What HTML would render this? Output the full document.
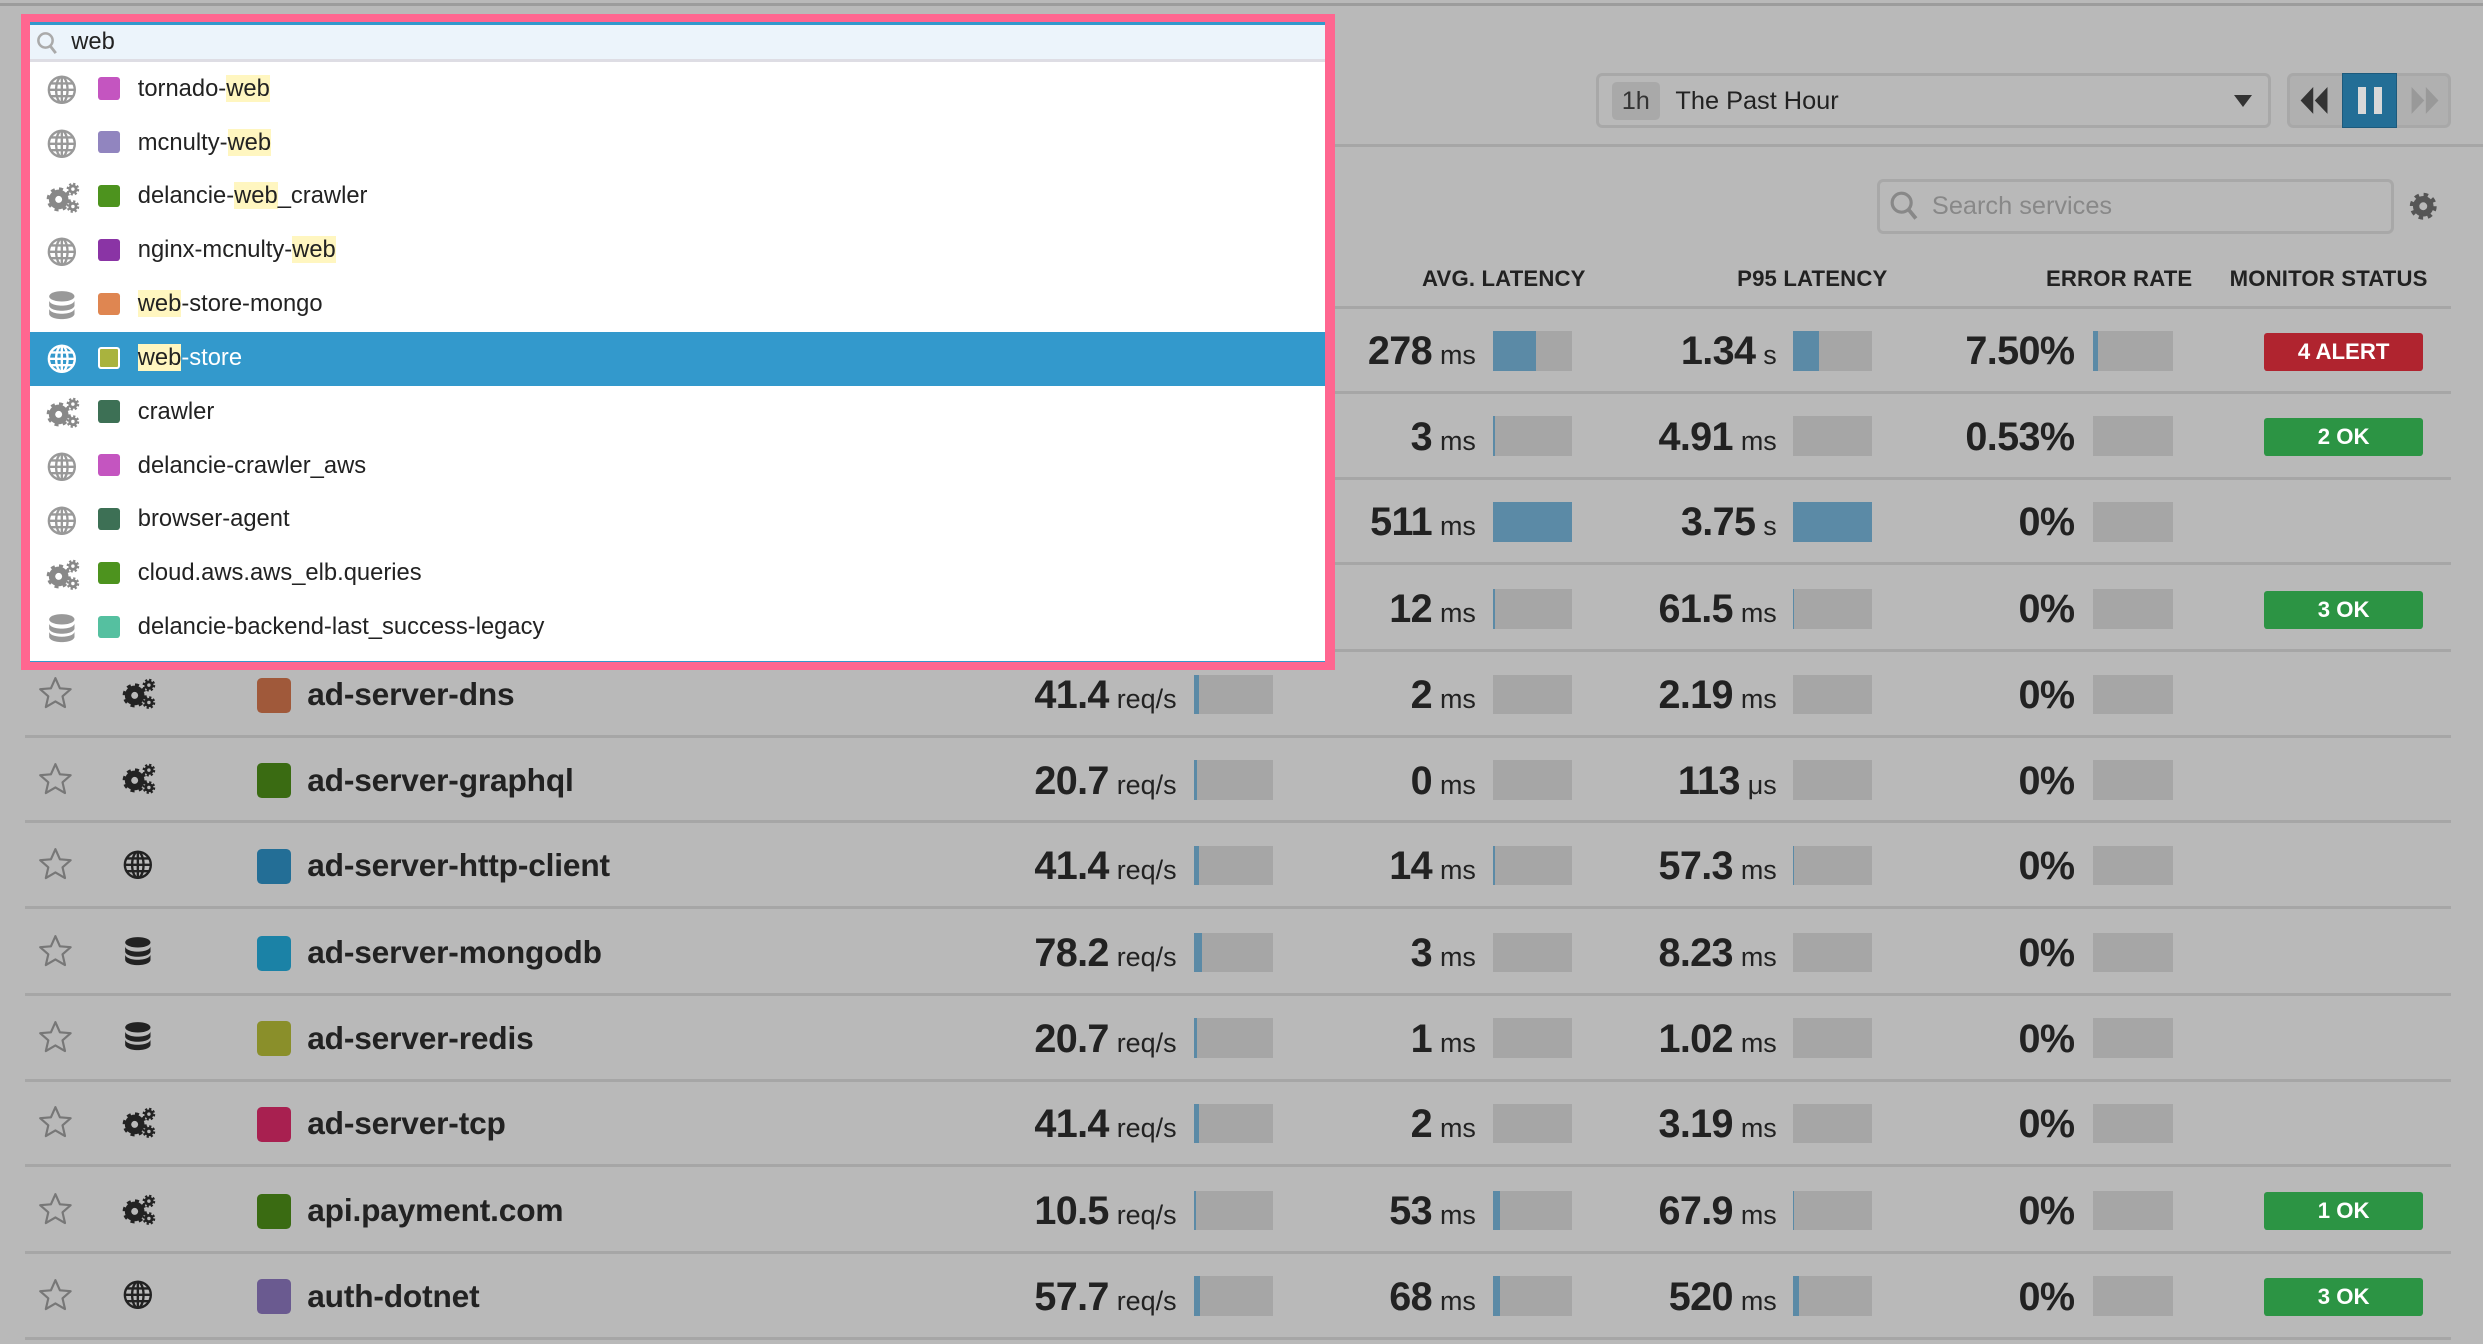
<!DOCTYPE html>
<html><head><meta charset="utf-8">
<style>
*{box-sizing:border-box;margin:0;padding:0}
html,body{width:2483px;height:1344px;overflow:hidden;background:#b9b9b9}
#w{zoom:1.58355;width:1568px;height:849px;position:relative;font-family:"Liberation Sans",sans-serif;color:#222;background:#b9b9b9}
.a{position:absolute}
.r{position:absolute;left:16px;width:1532px;height:54px;border-bottom:2px solid #a6a6a6}
.r>*{position:absolute}
.st{left:8px;top:15px}
.ic{left:61px;top:16px}
.sq{left:146px;top:16px;width:22px;height:22px;border-radius:3px}
.nm{left:178px;top:15px;font-weight:bold;font-size:20px;letter-spacing:-.1px}
.v{top:13px;text-align:right;font-weight:bold;font-size:25px;letter-spacing:-.4px;white-space:nowrap}
.v small{font-size:17px;font-weight:normal;letter-spacing:0;margin-left:5px}
.v1{left:560px;width:167px}.v2{left:760px;width:156px}.v3{left:950px;width:156px}.v4{left:1140px;width:154px}
.b{top:14px;width:50px;height:25px;background:#a6a6a6}
.b i{position:absolute;left:0;top:0;bottom:0;background:#5b8aa6}
.b1{left:738px}.b2{left:927px}.b3{left:1116px}.b4{left:1306px}
.bd{left:1414px;top:15px;width:100px;height:24px;border-radius:2px;color:#fff;font-weight:bold;font-size:14px;text-align:center;line-height:24px}
.ok{background:#2c9444}.al{background:#b0242f}
.h{top:168px;font-weight:bold;font-size:14px;letter-spacing:.1px}
#dd{left:13px;top:9px;width:830px;height:414px;background:#ff6690;padding:5px 6px 5px 6px}
#pn{background:#fff;width:100%;height:100%;position:relative;border-top:2px solid #3399cc;border-bottom:1px solid #3399cc}
.it{position:absolute;left:0;width:100%;height:34px;font-size:15px}
.it>*{position:absolute}
.it svg{left:10px;top:7px}
.it .c{left:43px;top:9px;width:14px;height:14px;border-radius:2px}
.it .t{left:68px;top:6px;line-height:20px}
.it mark{background:#fff6c0;color:#222}
</style></head><body>
<div id="w">
<svg width="0" height="0" style="position:absolute">
<defs>
<symbol id="gl" viewBox="0 0 20 20"><g fill="none" stroke="currentColor" stroke-width="1.5"><circle cx="10" cy="10" r="8.2"/><ellipse cx="10" cy="10" rx="3.6" ry="8.2"/><line x1="10" y1="2" x2="10" y2="18"/><line x1="2" y1="10" x2="18" y2="10"/><line x1="3.2" y1="6" x2="16.8" y2="6"/><line x1="3.2" y1="14" x2="16.8" y2="14"/></g></symbol>
<symbol id="gr" viewBox="0 0 22 20"><g fill="none" stroke="currentColor"><circle cx="8" cy="11" r="4.2" stroke-width="4"/><circle cx="8" cy="11" r="6.3" stroke-width="2.6" stroke-dasharray="2.4 2.55"/><circle cx="17" cy="4.5" r="2" stroke-width="1.8"/><circle cx="17" cy="4.5" r="3.3" stroke-width="1.4" stroke-dasharray="1.4 1.2"/><circle cx="17" cy="15.5" r="2" stroke-width="1.8"/><circle cx="17" cy="15.5" r="3.3" stroke-width="1.4" stroke-dasharray="1.4 1.2"/></g></symbol>
<symbol id="db" viewBox="0 0 20 20"><g fill="currentColor"><ellipse cx="10" cy="4" rx="8" ry="3.3"/><path d="M2 6.5c0 2 3.6 3.4 8 3.4s8-1.4 8-3.4v3.2c0 2-3.6 3.4-8 3.4s-8-1.4-8-3.4z"/><path d="M2 11.6c0 2 3.6 3.4 8 3.4s8-1.4 8-3.4v3.4c0 2-3.6 3.4-8 3.4s-8-1.4-8-3.4z"/></g></symbol>
<symbol id="sr" viewBox="0 0 24 24"><path d="M12 1.5l3.1 7 7.4.6-5.6 4.9 1.7 7.4L12 17.5l-6.6 3.9 1.7-7.4L1.5 9.1l7.4-.6z" fill="none" stroke="#777" stroke-width="1.5" stroke-linejoin="round"/></symbol>
</defs></svg>

<div class="a" style="left:0;top:2px;width:1568px;height:2px;background:#9c9c9c"></div>
<div class="a" style="left:843px;top:91px;width:725px;height:2px;background:#a6a6a6"></div>

<div class="a" style="left:1008px;top:46px;width:426px;height:35px;border:2px solid #a8a8a8;border-radius:4px"></div>
<div class="a" style="left:1018px;top:52px;width:30px;height:24px;background:#a9a9a9;border-radius:3px;font-size:16px;text-align:center;line-height:24px;color:#333">1h</div>
<div class="a" style="left:1058px;top:54px;font-size:16px;line-height:20px">The Past Hour</div>
<div class="a" style="left:1411px;top:60px;width:0;height:0;border-left:6px solid transparent;border-right:6px solid transparent;border-top:8px solid #333"></div>
<div class="a" style="left:1444px;top:46px;width:104px;height:35px;border:2px solid #a8a8a8;border-radius:4px;background:#b0b0b0"></div>
<svg class="a" style="left:1452px;top:55px" width="20" height="17" viewBox="0 0 20 17"><path d="M9 0v17L1 8.5zM18 0v17L10 8.5z" fill="#333"/></svg>
<div class="a" style="left:1479px;top:46px;width:35px;height:35px;background:#236e96;border:1px solid #1c5a7c"></div>
<div class="a" style="left:1489px;top:55px;width:5px;height:17px;background:#d8d8d8"></div>
<div class="a" style="left:1499px;top:55px;width:5px;height:17px;background:#d8d8d8"></div>
<svg class="a" style="left:1522px;top:55px" width="20" height="17" viewBox="0 0 20 17"><path d="M1 0v17l8-8.5zM10 0v17l8-8.5z" fill="#999"/></svg>

<div class="a" style="left:1185px;top:113px;width:327px;height:35px;border:2px solid #a8a8a8;border-radius:4px"></div>
<svg class="a" style="left:1193px;top:120px" width="20" height="20" viewBox="0 0 20 20"><circle cx="8" cy="8" r="6" fill="none" stroke="#888" stroke-width="2"/><line x1="12.5" y1="12.5" x2="17" y2="18" stroke="#888" stroke-width="2.4"/></svg>
<div class="a" style="left:1220px;top:121px;font-size:16px;color:#888">Search services</div>
<svg class="a" style="left:1521px;top:121px" width="18" height="18" viewBox="0 0 18 18"><circle cx="9" cy="9" r="4.5" fill="none" stroke="#555" stroke-width="4"/><circle cx="9" cy="9" r="7" fill="none" stroke="#555" stroke-width="3" stroke-dasharray="2.7 2.8"/></svg>

<div class="a h" style="left:898px">AVG. LATENCY</div>
<div class="a h" style="left:1097px">P95 LATENCY</div>
<div class="a h" style="left:1292px">ERROR RATE</div>
<div class="a h" style="left:1408px">MONITOR STATUS</div>
<div class="a" style="left:16px;top:193px;width:1532px;height:2px;background:#a6a6a6"></div>

<div class="r" style="top:195px"><div class="v v2">278<small>ms</small></div><div class="b b2"><i style="width:27px"></i></div><div class="v v3">1.34<small>s</small></div><div class="b b3"><i style="width:17px"></i></div><div class="v v4">7.50%</div><div class="b b4"><i style="width:3px"></i></div><div class="bd al">4 ALERT</div></div>
<div class="r" style="top:249px"><div class="v v2">3<small>ms</small></div><div class="b b2"><i style="width:1px"></i></div><div class="v v3">4.91<small>ms</small></div><div class="b b3"></div><div class="v v4">0.53%</div><div class="b b4"></div><div class="bd ok">2 OK</div></div>
<div class="r" style="top:303px"><div class="v v2">511<small>ms</small></div><div class="b b2"><i style="width:50px"></i></div><div class="v v3">3.75<small>s</small></div><div class="b b3"><i style="width:50px"></i></div><div class="v v4">0%</div><div class="b b4"></div></div>
<div class="r" style="top:358px"><div class="v v2">12<small>ms</small></div><div class="b b2"><i style="width:1px"></i></div><div class="v v3">61.5<small>ms</small></div><div class="b b3"><i style="width:1px"></i></div><div class="v v4">0%</div><div class="b b4"></div><div class="bd ok">3 OK</div></div>

<div class="r" style="top:412px"><svg class="st" width="22" height="22"><use href="#sr"/></svg><svg class="ic" width="22" height="20" style="color:#222"><use href="#gr"/></svg><div class="sq" style="background:#a0593a"></div><div class="nm">ad-server-dns</div><div class="v v1">41.4<small>req/s</small></div><div class="b b1"><i style="width:3px"></i></div><div class="v v2">2<small>ms</small></div><div class="b b2"></div><div class="v v3">2.19<small>ms</small></div><div class="b b3"></div><div class="v v4">0%</div><div class="b b4"></div></div>
<div class="r" style="top:466px"><svg class="st" width="22" height="22"><use href="#sr"/></svg><svg class="ic" width="22" height="20" style="color:#222"><use href="#gr"/></svg><div class="sq" style="background:#3a6b12"></div><div class="nm">ad-server-graphql</div><div class="v v1">20.7<small>req/s</small></div><div class="b b1"><i style="width:2px"></i></div><div class="v v2">0<small>ms</small></div><div class="b b2"></div><div class="v v3">113<small>μs</small></div><div class="b b3"></div><div class="v v4">0%</div><div class="b b4"></div></div>
<div class="r" style="top:520px"><svg class="st" width="22" height="22"><use href="#sr"/></svg><svg class="ic" width="20" height="20" style="color:#222"><use href="#gl"/></svg><div class="sq" style="background:#236e96"></div><div class="nm">ad-server-http-client</div><div class="v v1">41.4<small>req/s</small></div><div class="b b1"><i style="width:3px"></i></div><div class="v v2">14<small>ms</small></div><div class="b b2"><i style="width:1px"></i></div><div class="v v3">57.3<small>ms</small></div><div class="b b3"><i style="width:1px"></i></div><div class="v v4">0%</div><div class="b b4"></div></div>
<div class="r" style="top:575px"><svg class="st" width="22" height="22"><use href="#sr"/></svg><svg class="ic" width="20" height="20" style="color:#222"><use href="#db"/></svg><div class="sq" style="background:#1b82a6"></div><div class="nm">ad-server-mongodb</div><div class="v v1">78.2<small>req/s</small></div><div class="b b1"><i style="width:5px"></i></div><div class="v v2">3<small>ms</small></div><div class="b b2"></div><div class="v v3">8.23<small>ms</small></div><div class="b b3"></div><div class="v v4">0%</div><div class="b b4"></div></div>
<div class="r" style="top:629px"><svg class="st" width="22" height="22"><use href="#sr"/></svg><svg class="ic" width="20" height="20" style="color:#222"><use href="#db"/></svg><div class="sq" style="background:#8a8f2a"></div><div class="nm">ad-server-redis</div><div class="v v1">20.7<small>req/s</small></div><div class="b b1"><i style="width:2px"></i></div><div class="v v2">1<small>ms</small></div><div class="b b2"></div><div class="v v3">1.02<small>ms</small></div><div class="b b3"></div><div class="v v4">0%</div><div class="b b4"></div></div>
<div class="r" style="top:683px"><svg class="st" width="22" height="22"><use href="#sr"/></svg><svg class="ic" width="22" height="20" style="color:#222"><use href="#gr"/></svg><div class="sq" style="background:#a82050"></div><div class="nm">ad-server-tcp</div><div class="v v1">41.4<small>req/s</small></div><div class="b b1"><i style="width:3px"></i></div><div class="v v2">2<small>ms</small></div><div class="b b2"></div><div class="v v3">3.19<small>ms</small></div><div class="b b3"></div><div class="v v4">0%</div><div class="b b4"></div></div>
<div class="r" style="top:738px"><svg class="st" width="22" height="22"><use href="#sr"/></svg><svg class="ic" width="22" height="20" style="color:#222"><use href="#gr"/></svg><div class="sq" style="background:#3a6b12"></div><div class="nm">api.payment.com</div><div class="v v1">10.5<small>req/s</small></div><div class="b b1"><i style="width:1px"></i></div><div class="v v2">53<small>ms</small></div><div class="b b2"><i style="width:4px"></i></div><div class="v v3">67.9<small>ms</small></div><div class="b b3"><i style="width:1px"></i></div><div class="v v4">0%</div><div class="b b4"></div><div class="bd ok">1 OK</div></div>
<div class="r" style="top:792px"><svg class="st" width="22" height="22"><use href="#sr"/></svg><svg class="ic" width="20" height="20" style="color:#222"><use href="#gl"/></svg><div class="sq" style="background:#6a5a90"></div><div class="nm">auth-dotnet</div><div class="v v1">57.7<small>req/s</small></div><div class="b b1"><i style="width:4px"></i></div><div class="v v2">68<small>ms</small></div><div class="b b2"><i style="width:4px"></i></div><div class="v v3">520<small>ms</small></div><div class="b b3"><i style="width:4px"></i></div><div class="v v4">0%</div><div class="b b4"></div><div class="bd ok">3 OK</div></div>

<div id="dd" class="a"><div id="pn">
<div class="a" style="left:0;top:0;width:100%;height:23px;background:#ecf4fb;border-bottom:2px solid #dedde4"></div>
<svg class="a" style="left:4px;top:4px" width="14" height="16" viewBox="0 0 14 16"><circle cx="6" cy="6" r="4.5" fill="none" stroke="#aaa" stroke-width="1.6"/><line x1="9" y1="9.5" x2="12.5" y2="14" stroke="#aaa" stroke-width="1.8"/></svg>
<div class="a" style="left:26px;top:2px;font-size:15px">web</div>
<div class="it" style="top:24px"><svg width="20" height="20" style="color:#999"><use href="#gl"/></svg><div class="c" style="background:#c455c0"></div><div class="t">tornado-<mark>web</mark></div></div>
<div class="it" style="top:58px"><svg width="20" height="20" style="color:#999"><use href="#gl"/></svg><div class="c" style="background:#9185bf"></div><div class="t">mcnulty-<mark>web</mark></div></div>
<div class="it" style="top:92px"><svg width="22" height="20" style="color:#888"><use href="#gr"/></svg><div class="c" style="background:#4d931e"></div><div class="t">delancie-<mark>web</mark>_crawler</div></div>
<div class="it" style="top:126px"><svg width="20" height="20" style="color:#999"><use href="#gl"/></svg><div class="c" style="background:#8a34a5"></div><div class="t">nginx-mcnulty-<mark>web</mark></div></div>
<div class="it" style="top:160px"><svg width="20" height="20" style="color:#999"><use href="#db"/></svg><div class="c" style="background:#df8651"></div><div class="t"><mark>web</mark>-store-mongo</div></div>
<div class="it" style="top:194px;background:#3399cc;color:#fff"><svg width="20" height="20" style="color:#fff"><use href="#gl"/></svg><div class="c" style="background:#a9b33e;border:1.5px solid #fff"></div><div class="t"><mark>web</mark>-store</div></div>
<div class="it" style="top:228px"><svg width="22" height="20" style="color:#888"><use href="#gr"/></svg><div class="c" style="background:#3d7055"></div><div class="t">crawler</div></div>
<div class="it" style="top:262px"><svg width="20" height="20" style="color:#999"><use href="#gl"/></svg><div class="c" style="background:#c455c0"></div><div class="t">delancie-crawler_aws</div></div>
<div class="it" style="top:296px"><svg width="20" height="20" style="color:#999"><use href="#gl"/></svg><div class="c" style="background:#3d7055"></div><div class="t">browser-agent</div></div>
<div class="it" style="top:330px"><svg width="22" height="20" style="color:#888"><use href="#gr"/></svg><div class="c" style="background:#4d931e"></div><div class="t">cloud.aws.aws_elb.queries</div></div>
<div class="it" style="top:364px"><svg width="20" height="20" style="color:#999"><use href="#db"/></svg><div class="c" style="background:#55c0a0"></div><div class="t">delancie-backend-last_success-legacy</div></div>
</div></div>
</div>
</body></html>
